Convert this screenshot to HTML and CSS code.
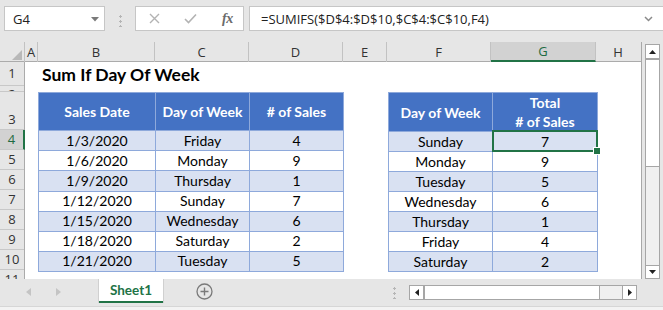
FILE: index.html
```html
<!DOCTYPE html>
<html>
<head>
<meta charset="utf-8">
<link rel="stylesheet" href="styles.css">
</head>
<body>
<div class="app">
  <div class="formula-bar">
    <div class="namebox"><span>G4</span><svg class="caret" width="8" height="5" viewBox="0 0 8 5"><path d="M0 0H8L4 4.5Z" fill="#7a7a7a"/></svg></div>
    <div class="grip"></div>
    <div class="fxbox">
      <svg class="ico-x" width="11" height="11" viewBox="0 0 11 11"><path d="M1 1L10 10M10 1L1 10" stroke="#b3b3b3" stroke-width="1.4" fill="none"/></svg>
      <svg class="ico-ok" width="13" height="11" viewBox="0 0 13 11"><path d="M1 6L4.5 9.5L12 1.5" stroke="#b3b3b3" stroke-width="1.6" fill="none"/></svg>
      <span class="fx">fx</span>
    </div>
    <div class="formula"><span>=SUMIFS($D$4:$D$10,$C$4:$C$10,F4)</span><svg class="chev" width="9" height="6" viewBox="0 0 9 6"><path d="M1 1L4.5 4.5L8 1" stroke="#8a8a8a" stroke-width="1.5" fill="none"/></svg></div>
  </div>

  <div class="sheet">
    <div class="grid">
      <div class="col-headers">
        <div class="corner"><svg width="10" height="10" viewBox="0 0 10 10"><path d="M10 0V10H0Z" fill="#b8b8b8"/></svg></div>
        <div class="ch">A</div>
        <div class="ch">B</div>
        <div class="ch">C</div>
        <div class="ch">D</div>
        <div class="ch">E</div>
        <div class="ch">F</div>
        <div class="ch sel">G</div>
        <div class="ch">H</div>
      </div>
      <div class="body">
        <div class="row-headers">
          <div class="rh r1">1</div>
          <div class="rh r2">2</div>
          <div class="rh r3">3</div>
          <div class="rh r20 sel">4</div>
          <div class="rh r20">5</div>
          <div class="rh r20">6</div>
          <div class="rh r20">7</div>
          <div class="rh r20">8</div>
          <div class="rh r20">9</div>
          <div class="rh r20">10</div>
          <div class="rh r20">11</div>
        </div>
        <div class="cells">
          <div class="title-row">Sum If Day Of Week</div>
          <div class="spacer-row"></div>
          <div class="tables">
            <table class="t1">
              <colgroup><col class="w117"><col class="w94"><col class="w94"></colgroup>
              <tr class="hdr"><th>Sales Date</th><th>Day of Week</th><th># of Sales</th></tr>
              <tr class="band"><td>1/3/2020</td><td>Friday</td><td>4</td></tr>
              <tr><td>1/6/2020</td><td>Monday</td><td>9</td></tr>
              <tr class="band"><td>1/9/2020</td><td>Thursday</td><td>1</td></tr>
              <tr><td>1/12/2020</td><td>Sunday</td><td>7</td></tr>
              <tr class="band"><td>1/15/2020</td><td>Wednesday</td><td>6</td></tr>
              <tr><td>1/18/2020</td><td>Saturday</td><td>2</td></tr>
              <tr class="band"><td>1/21/2020</td><td>Tuesday</td><td>5</td></tr>
            </table>
            <table class="t2">
              <colgroup><col class="w104"><col class="w105"></colgroup>
              <tr class="hdr"><th>Day of Week</th><th>Total<br># of Sales</th></tr>
              <tr class="band"><td>Sunday</td><td class="selcell">7</td></tr>
              <tr><td>Monday</td><td>9</td></tr>
              <tr class="band"><td>Tuesday</td><td>5</td></tr>
              <tr><td>Wednesday</td><td>6</td></tr>
              <tr class="band"><td>Thursday</td><td>1</td></tr>
              <tr><td>Friday</td><td>4</td></tr>
              <tr class="band"><td>Saturday</td><td>2</td></tr>
            </table>
          </div>
        </div>
      </div>
    </div>
    <div class="vscroll">
      <div class="vs-btn"><svg width="7" height="4" viewBox="0 0 7 4"><path d="M0 4H7L3.5 0Z" fill="#222"/></svg></div>
      <div class="vs-thumb"></div>
      <div class="vs-track"></div>
      <div class="vs-btn down"><svg width="7" height="4" viewBox="0 0 7 4"><path d="M0 0H7L3.5 4Z" fill="#222"/></svg></div>
    </div>
  </div>

  <div class="tabbar">
    <div class="nav">
      <svg class="nav-l" width="5" height="8" viewBox="0 0 5 8"><path d="M5 0V8L0 4Z" fill="#c4c4c4"/></svg>
      <svg class="nav-r" width="5" height="8" viewBox="0 0 5 8"><path d="M0 0V8L5 4Z" fill="#c4c4c4"/></svg>
    </div>
    <div class="tab">Sheet1</div>
    <svg class="add" width="17" height="17" viewBox="0 0 17 17"><circle cx="8.5" cy="8.5" r="7.5" stroke="#7a7a7a" stroke-width="1.3" fill="none"/><path d="M8.5 4.5V12.5M4.5 8.5H12.5" stroke="#7a7a7a" stroke-width="1.4"/></svg>
    <div class="grip2"></div>
    <div class="hscroll">
      <div class="hs-btn"><svg width="4" height="7" viewBox="0 0 4 7"><path d="M4 0V7L0 3.5Z" fill="#222"/></svg></div>
      <div class="hs-thumb"></div>
      <div class="hs-track"></div>
      <div class="hs-btn"><svg width="4" height="7" viewBox="0 0 4 7"><path d="M0 0V7L4 3.5Z" fill="#222"/></svg></div>
    </div>
  </div>
  <div class="status"></div>
</div>
</body>
</html>
```

FILE: styles.css
```css
* { box-sizing: border-box; margin: 0; padding: 0; }
html, body { margin: 0; width: 663px; height: 310px; overflow: hidden; }
body { background: #e6e6e6; font-family: "Lato", "Open Sans", sans-serif; color: #000; }

.app { width: 663px; height: 310px; display: flex; flex-direction: column; }

/* formula bar */
.formula-bar { height: 42px; display: flex; align-items: flex-start; padding: 6px 0 0 4px; }
.namebox { width: 101px; height: 25px; background: #fff; border: 1px solid #c6c6c6; display: flex; align-items: center; justify-content: space-between; padding: 0 5px 0 8px; font: 13px "Open Sans", sans-serif; color: #222; }
.caret { margin-top: 1px; }
.grip { width: 3px; height: 13px; margin: 8px 13px 0 14px; background: radial-gradient(circle, #b5b5b5 1px, transparent 1.3px) 0 0 / 3px 5px repeat-y; }
.fxbox { width: 109px; height: 25px; background: #fff; border: 1px solid #c6c6c6; display: flex; align-items: center; padding-left: 13px; }
.ico-x { margin-right: 24px; }
.ico-ok { margin-right: 25px; }
.fx { font: italic bold 14px "Liberation Serif", serif; color: #6b6b6b; letter-spacing: -0.5px; }
.formula { margin-left: 5px; flex: 1; height: 25px; background: #fff; border: 1px solid #c6c6c6; border-right: none; display: flex; align-items: center; justify-content: space-between; padding: 0 10px 0 11px; font: 13px "Open Sans", sans-serif; color: #222; }

/* sheet */
.sheet { display: flex; height: 237px; }
.grid { width: 642px; border-right: 1px solid #a8a8a8; display: flex; flex-direction: column; }
.col-headers { display: grid; grid-template-columns: 25px 13px 117px 94px 94px 44px 104px 105px 44px; height: 20px; border-bottom: 1px solid #ababab; }
.corner { display: flex; align-items: flex-end; justify-content: flex-end; padding: 0 2px 2px 0; border-right: 1px solid #c2c2c2; }
.ch { display: flex; align-items: center; justify-content: center; border-right: 1px solid #c2c2c2; font: 13px "Open Sans", sans-serif; color: #333; }
.ch:last-child { border-right: none; }
.ch.sel { background: #d2d2d2; color: #1e6b41; border-bottom: 2px solid #217346; }

.body { display: flex; height: 217px; overflow: hidden; }
.row-headers { width: 25px; flex: none; display: flex; flex-direction: column; border-right: 1px solid #ababab; }
.rh { flex: none; display: flex; align-items: flex-end; justify-content: center; border-bottom: 1px solid #c8c8c8; font: 13px "Open Sans", sans-serif; color: #333; line-height: 17px; overflow: hidden; }
.rh.r1 { height: 24px; padding-bottom: 3px; }
.rh.r2 { height: 6px; line-height: 17px; align-items: flex-start; }
.rh.r3 { height: 38px; padding-bottom: 1px; }
.rh.r20 { height: 20px; padding-bottom: 1px; }
.rh.sel { background: #d2d2d2; color: #1e6b41; border-right: 2px solid #217346; margin-right: -1px; }

.cells { width: 616px; background: #fff; overflow: hidden; }
.title-row { height: 24px; padding-left: 17px; font: bold 17.5px "Lato", sans-serif; line-height: 26px; color: #000; }
.spacer-row { height: 6px; }
.tables { display: flex; padding-left: 13px; gap: 44px; }

table { border-collapse: collapse; table-layout: fixed; }
.t1 { width: 305px; }
.t2 { width: 209px; }
col.w117 { width: 117px; }
col.w94 { width: 94px; }
col.w104 { width: 104px; }
col.w105 { width: 105px; }
th, td { border: 1px solid #8ea9db; text-align: center; padding: 0; font-size: 14px; }
th { background: #4472c4; color: #fff; font-weight: bold; height: 38px; line-height: 19px; }
td { height: 20px; line-height: 18px; color: #000; }
tr.band td { background: #d9e1f2; }
td.selcell { position: relative; }
td.selcell::before { content: ""; position: absolute; left: -1px; top: -2px; right: -1px; bottom: -1px; border: 2px solid #217346; }
td.selcell::after { content: ""; position: absolute; right: -4px; bottom: -4px; width: 6px; height: 6px; background: #217346; border: 1px solid #fff; }

/* vertical scroll */
.vscroll { width: 21px; padding: 2px 0 0 3px; display: flex; flex-direction: column; }
.vs-btn { width: 15px; height: 15px; border: 1px solid #a6a6a6; background: #fff; display: flex; align-items: center; justify-content: center; flex: none; }
.vs-btn.down { height: 14px; }
.vs-thumb { width: 15px; height: 109px; border: 1px solid #a6a6a6; border-top-width: 2px; background: #fff; flex: none; margin-top: -1px; }
.vs-track { width: 15px; flex: 1; background: #f0f0f0; border-left: 1px solid #a6a6a6; border-right: 1px solid #a6a6a6; }

/* tab bar */
.tabbar { height: 27px; display: flex; align-items: flex-start; flex: none; }
.nav { width: 99px; height: 26px; display: flex; align-items: center; padding-left: 26px; }
.nav-r { margin-left: 25px; }
.tab { width: 64px; height: 24px; margin-top: 0; background: #fff; border-bottom: 2px solid #217346; display: flex; align-items: center; justify-content: center; font: bold 13.5px "Lato", sans-serif; color: #217346; box-shadow: 1px 0 0 #d0d0d0, -1px 0 0 #d0d0d0; }
.add { margin: 4px 0 0 33px; }
.grip2 { width: 3px; height: 13px; margin: 7px 0 0 180px; background: radial-gradient(circle, #b5b5b5 1px, transparent 1.3px) 0 0 / 3px 5px repeat-y; }
.hscroll { display: flex; margin: 6px 0 0 13px; height: 15px; }
.hs-btn { width: 15px; height: 15px; border: 1px solid #a6a6a6; background: #fff; display: flex; align-items: center; justify-content: center; }
.hs-thumb { width: 177px; height: 15px; border: 1px solid #a6a6a6; border-left-width: 2px; margin-left: -1px; background: #fff; }
.hs-track { width: 22px; height: 15px; background: #f0f0f0; border-top: 1px solid #a6a6a6; border-bottom: 1px solid #a6a6a6; }

.status { height: 4px; background: #f3f3f3; border-top: 1px solid #d6d6d6; }
```
